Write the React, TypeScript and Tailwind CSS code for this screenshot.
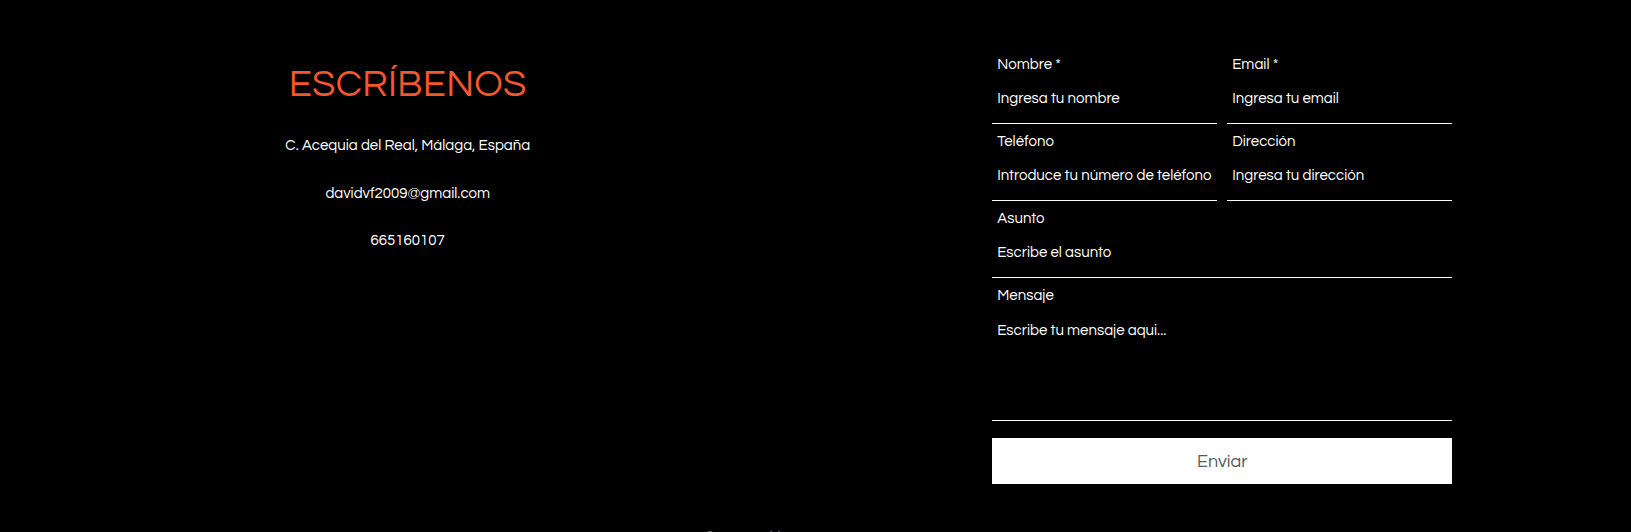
import React from "react";

// datos de contacto
const CONTACT = {
  title: "ESCRÍBENOS",
  lines: ["C. Acequia del Real, Málaga, España", "davidvf2009@gmail.com", "665160107"],
};

const FONT = "font-['Questrial','Inter','Noto_Sans',sans-serif]";

function Field({ label, placeholder }: { label: string; placeholder: string }) {
  return (
    <div className="flex h-[77px] flex-col border-b border-white px-[5px] pt-[8px]">
      <label className="h-5 text-[15px] leading-5 text-white">{label}</label>
      <input
        placeholder={placeholder}
        className="mt-[14px] h-5 w-full bg-transparent text-[15px] leading-5 text-white outline-none placeholder:text-white"
      />
    </div>
  );
}

export default function App() {
  return (
    <div className={`h-[532px] w-full overflow-hidden bg-black ${FONT}`}>
      <div className="grid h-[527px] grid-cols-2">
        {/* columna izquierda */}
        <div className="flex flex-col items-center pt-[63px]">
          <h2 className="text-[38px] leading-[44px] tracking-[0.3px] text-[#f4572b]">{CONTACT.title}</h2>
          <div className="mt-[29px] flex flex-col items-center gap-[27.5px]">
            {CONTACT.lines.map((l) => (
              <p key={l} className="h-5 text-[15px] leading-5 text-white">{l}</p>
            ))}
          </div>
        </div>

        {/* formulario */}
        <div className="flex justify-center pt-[47px]">
          <form className="mr-[2px] flex w-[460px] flex-col" onSubmit={(e) => e.preventDefault()}>
            <div className="grid grid-cols-2 gap-x-[10px]">
              <Field label="Nombre *" placeholder="Ingresa tu nombre" />
              <Field label="Email *" placeholder="Ingresa tu email" />
              <Field label="Teléfono" placeholder="Introduce tu número de teléfono" />
              <Field label="Dirección" placeholder="Ingresa tu dirección" />
            </div>
            <Field label="Asunto" placeholder="Escribe el asunto" />
            <div className="flex h-[143px] flex-col border-b border-white px-[5px] pt-[8px]">
              <label className="h-5 text-[15px] leading-5 text-white">Mensaje</label>
              <textarea
                placeholder="Escribe tu mensaje aqui..."
                className="mt-[15px] flex-1 resize-none bg-transparent text-[15px] leading-5 text-white outline-none placeholder:text-white"
              />
            </div>
            <button type="submit" className="mt-[17px] h-[46px] w-full bg-white text-[18px] text-[#5a5a5a]">
              Enviar
            </button>
          </form>
        </div>
      </div>
      <p className="pl-[705px] text-[13px] leading-5 text-[#9a9a9a]">©2024 David VF</p>
    </div>
  );
}
